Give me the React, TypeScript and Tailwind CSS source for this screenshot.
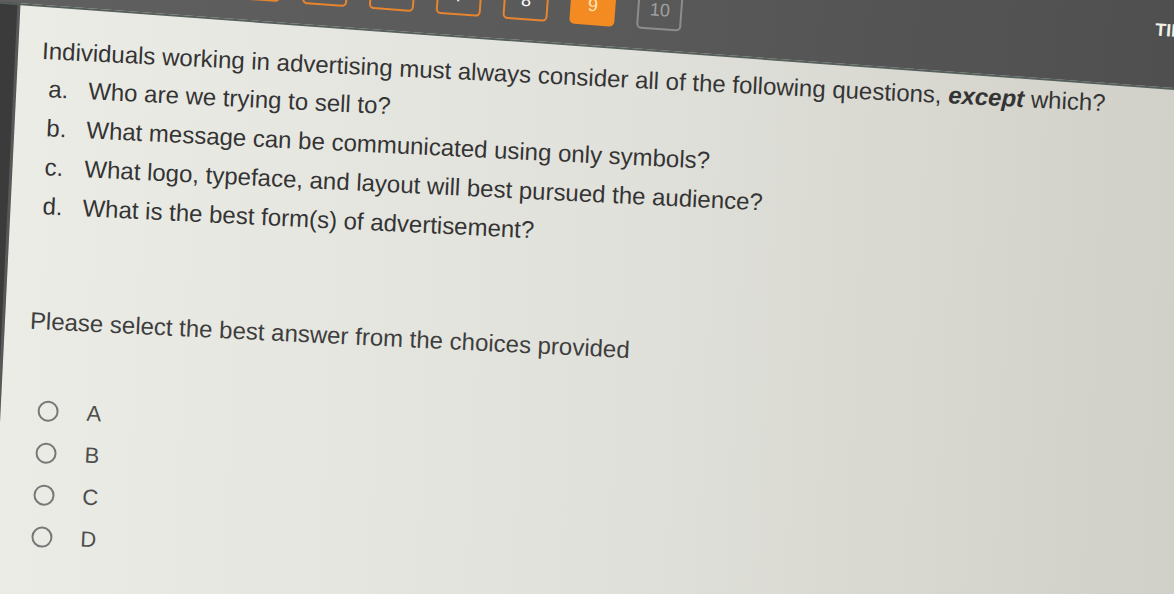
import React from 'react';

const pages = [3, 4, 5, 6, 7, 8, 9, 10];
const current = 9;

const items = [
  { key: 'a.', text: 'Who are we trying to sell to?' },
  { key: 'b.', text: 'What message can be communicated using only symbols?' },
  { key: 'c.', text: 'What logo, typeface, and layout will best pursued the audience?' },
  { key: 'd.', text: 'What is the best form(s) of advertisement?' },
];

const choices = ['A', 'B', 'C', 'D'];

const PageButton = ({ n }: { n: number }) => {
  const active = n === current;
  const done = n < current;
  let cls = 'border-[#8d8d8d] text-[#a0a0a0]';
  if (active) cls = 'border-[#f38b22] bg-[#f38b22] text-[#fde6bd]';
  else if (done) cls = 'border-[#e8842e] text-white';

  return (
    <button
      className={`flex h-[40px] w-[45px] shrink-0 items-center justify-center rounded-[5px] border-2 text-[18px] ${cls}`}
    >
      {n}
    </button>
  );
};

export default function App() {
  return (
    <div
      className="flex h-[594px] w-[1174px] flex-col overflow-hidden bg-[#444444]"
      style={{ fontFamily: '"Liberation Sans", Arial, sans-serif' }}
    >
      {/* Top bar with question navigation */}
      <header className="relative z-10 -mt-[121px] -ml-[60px] flex h-[120px] w-[1300px] shrink-0 origin-top-left rotate-[4.2deg] items-end gap-[22px] border-b-2 border-[#55605c] bg-linear-to-r from-[#606060] via-[#5a5a5a] to-[#4e4e4e] pb-[20px] pl-[236px]">
        {pages.map((n) => (
          <PageButton key={n} n={n} />
        ))}
        <span className="ml-[451px] self-start mt-[50px] whitespace-nowrap text-[18px] leading-[22px] font-bold text-[#f1f1e6]">
          TIME REMAINING
        </span>
      </header>

      {/* Question panel */}
      <main className="-mt-[27px] -ml-[18px] flex h-[700px] w-[1260px] shrink-0 origin-top-left rotate-[2.8deg]">
        <aside className="w-[40px] shrink-0 border-r-[3px] border-[#585858] bg-[#3b3b3b]" />
        <section className="flex-1 bg-linear-to-r from-[#ecece7] via-[#e1e1db] to-[#cfcfc7] pt-[60px] text-[#343434]">
          <p className="pl-[24px] pt-[1px] text-[24px] leading-[30px] whitespace-nowrap">
            Individuals working in advertising must always consider all of the following questions,{' '}
            <em className="font-bold">except</em> which?
          </p>

          <ol className="mt-[3px]">
            {items.map((it) => (
              <li key={it.key} className="flex pl-[32px] text-[24px] leading-[39px] whitespace-nowrap">
                <span className="w-[40px] shrink-0">{it.key}</span>
                <span>{it.text}</span>
              </li>
            ))}
          </ol>

          <p className="mt-[81px] pl-[25px] text-[24px] leading-[30px] whitespace-nowrap text-[#3e3e3e]">
            Please select the best answer from the choices provided
          </p>

          <div className="mt-[53px] flex flex-col">
            {choices.map((c) => (
              <label key={c} className="flex h-[42px] items-center pl-[37px]">
                <span className="h-[21px] w-[21px] rounded-full border-2 border-[#787878]" />
                <span className="ml-[28px] text-[22px] text-[#4e4e4e]">{c}</span>
              </label>
            ))}
          </div>
        </section>
      </main>
    </div>
  );
}
